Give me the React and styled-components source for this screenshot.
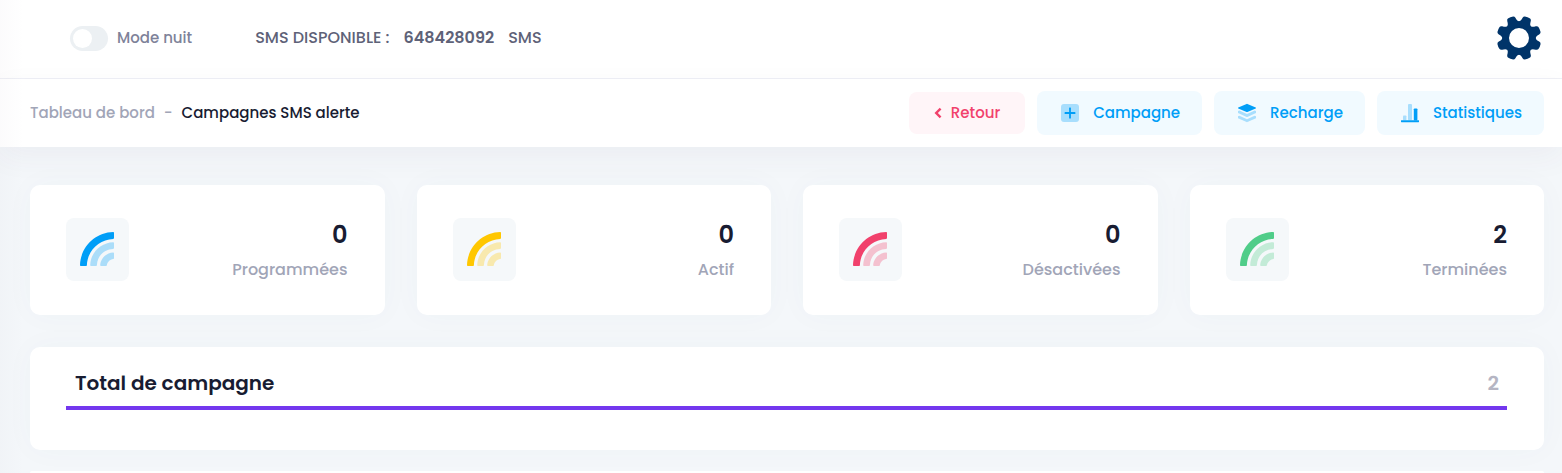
import React, { useState } from 'react'

import styled, { createGlobalStyle } from 'styled-components'

const GlobalStyle = createGlobalStyle`
  * {
    box-sizing: border-box;
  }

  body {
    margin: 0;
    font-family: Poppins, Inter, Helvetica, sans-serif;
    font-size: 16px;
    font-weight: 500;
    line-height: 24px;
    color: #181c32;
    background: #f4f7fa;
  }
`

const Page = styled.div`
  position: relative;
  min-height: 100vh;

  &::before {
    content: '';
    position: absolute;
    z-index: 2;
    top: 0;
    bottom: 0;
    left: 0;
    width: 24px;
    pointer-events: none;
    background: linear-gradient(to right, rgba(82, 63, 105, 0.02), rgba(82, 63, 105, 0));
  }
`

const TopBar = styled.header`
  display: flex;
  align-items: center;
  height: 79px;
  padding: 0 21px 2px 70px;
  background: #fff;
  border-bottom: 1px solid #eff0f6;
`

const NightSwitch = styled.label`
  display: flex;
  align-items: center;
  gap: 9px;
  font-size: 15px;
  color: #7e8299;
  cursor: pointer;
`

const SwitchInput = styled.input`
  appearance: none;
  display: flex;
  align-items: center;
  width: 38px;
  height: 25px;
  margin: 0;
  padding: 0 3px;
  border-radius: 13px;
  background: #ecf0f3;
  cursor: pointer;

  &::before {
    content: '';
    width: 19px;
    height: 19px;
    border-radius: 50%;
    background: #fff;
  }

  &:checked {
    justify-content: flex-end;
    background: #7337ee;
  }
`

const Credit = styled.div`
  display: flex;
  gap: 14px;
  margin-left: 63px;
  color: #5e6278;

  strong {
    font-weight: 600;
  }
`

const IconButton = styled.button`
  display: flex;
  margin-left: auto;
  padding: 0;
  border: none;
  background: none;
  cursor: pointer;
`

const SubHeader = styled.div`
  position: relative;
  display: flex;
  align-items: center;
  justify-content: space-between;
  padding: 12px 18px 12px 30px;
  background: #fff;
  font-size: 15px;
  box-shadow: 0 10px 30px 0 rgba(82, 63, 105, 0.05);
`

const Breadcrumb = styled.nav`
  display: flex;
  gap: 9px;
  color: #a1a5b7;

  a {
    color: inherit;
    text-decoration: none;
  }
`

const Current = styled.span`
  color: #181c32;
`

const Actions = styled.div`
  display: flex;
  align-items: center;
  gap: 12px;
`

const Action = styled.a`
  display: flex;
  align-items: center;
  gap: ${props => props.$danger ? '9px' : '13px'};
  height: ${props => props.$danger ? '42px' : '44px'};
  padding: ${props => props.$danger ? '0 25px' : '0 22px 0 23px'};
  border-radius: 8px;
  text-decoration: none;
  color: ${props => props.$danger ? '#f1416c' : '#009ef7'};
  background: ${props => props.$danger ? '#fff5f8' : '#f1faff'};
`

const Content = styled.main`
  display: flex;
  flex-direction: column;
  gap: 32px;
  padding: 38px 18px 0 30px;
`

const Stats = styled.div`
  display: grid;
  grid-template-columns: repeat(4, 1fr);
  gap: 32px;
`

const Card = styled.section`
  border-radius: 10px;
  background: #fff;
  box-shadow: 0 0 30px 0 rgba(76, 87, 125, 0.03);
`

const StatCard = styled(Card)`
  display: flex;
  align-items: center;
  justify-content: space-between;
  height: 130px;
  padding: 0 37px 1px 36px;
`

const Symbol = styled.span`
  display: flex;
  align-items: center;
  justify-content: center;
  width: 63px;
  height: 63px;
  border-radius: 8px;
  background: #f5f8fa;
`

const StatText = styled.div`
  display: flex;
  flex-direction: column;
  gap: 5px;
  text-align: right;
  color: #a1a5b7;
`

const StatValue = styled.span`
  font-size: 24px;
  font-weight: 600;
  line-height: 36px;
  color: #181c32;
`

const Panels = styled.div`
  display: flex;
  flex-direction: column;
  gap: 21px;
`

const TotalCard = styled(Card)`
  padding: 20px 37px 40px 36px;
`

const TotalRow = styled.div`
  display: flex;
  justify-content: space-between;
  padding: 0 8px 7px 9px;
  border-bottom: 4px solid #7337ee;
  font-size: 20px;
  line-height: 32px;
  font-weight: 600;
  color: #b5b5c3;
`

const TotalTitle = styled.h2`
  margin: 0;
  font-size: inherit;
  font-weight: inherit;
  color: #181c32;
`

const ListCard = styled(Card)`
  height: 2px;
  border-radius: 10px 10px 0 0;
`

const TEETH = [0, 45, 90, 135, 180, 225, 270, 315]

function GearIcon() {
  return (
    <svg width="44" height="44" viewBox="-22 -22 44 44" fill="#003469" aria-hidden="true">
      {TEETH.map(angle => (
        <path
          key={angle}
          transform={`rotate(${angle + 22.5})`}
          d="M-6.4 -15.4 C-5.1 -16.2 -4.7 -17.6 -4.4 -20 Q-4.2 -21.8 -2.8 -22.2 Q0 -22.8 2.8 -22.2 Q4.2 -21.8 4.4 -20 C4.7 -17.6 5.1 -16.2 6.4 -15.4 L5 -12 H-5 Z"
        />
      ))}
      <circle r="13.3" fill="none" stroke="#003469" strokeWidth="6.6" />
    </svg>
  )
}

function BackIcon() {
  return (
    <svg width="8" height="12" viewBox="0 0 8 12" fill="none" stroke="currentColor" strokeWidth="2.4" aria-hidden="true">
      <path d="M6.6 1.6 L2.2 6 L6.6 10.4" />
    </svg>
  )
}

function PlusIcon() {
  return (
    <svg width="20" height="18" viewBox="-1 0 20 18" fill="currentColor" aria-hidden="true">
      <rect width="18" height="18" rx="3" opacity="0.3" />
      <path d="M8.1 4.1 Q8.1 3.6 8.6 3.6 H9.4 Q9.9 3.6 9.9 4.1 V8.1 H13.9 Q14.4 8.1 14.4 8.6 V9.4 Q14.4 9.9 13.9 9.9 H9.9 V13.9 Q9.9 14.4 9.4 14.4 H8.6 Q8.1 14.4 8.1 13.9 V9.9 H4.1 Q3.6 9.9 3.6 9.4 V8.6 Q3.6 8.1 4.1 8.1 H8.1 Z" />
    </svg>
  )
}

function LayersIcon() {
  return (
    <svg width="20" height="20" viewBox="-1 0 20 20" fill="currentColor" aria-hidden="true">
      <path d="M8.6 .9 Q9 .7 9.4 .9 L17.7 4.4 Q18.4 4.9 17.7 5.4 L9.4 9 Q9 9.2 8.6 9 L.3 5.4 Q-.4 4.9 .3 4.4 Z" />
      <path opacity="0.3" d="M0 8 L1.4 7.6 L9 11 L16.6 7.6 L18 8 V10 L9.4 13.9 Q9 14.1 8.6 13.9 L0 10 Z" />
      <path opacity="0.3" d="M0 13.2 L1.4 12.8 L9 16.2 L16.6 12.8 L18 13.2 V15.2 L9.4 19.1 Q9 19.3 8.6 19.1 L0 15.2 Z" />
    </svg>
  )
}

function ChartIcon() {
  return (
    <svg width="20" height="20" viewBox="-1 0 20 20" fill="currentColor" aria-hidden="true">
      <rect x="2" y="12.4" width="3.4" height="4.8" rx=".8" opacity="0.3" />
      <rect x="7" y="1" width="4" height="16.2" rx=".9" opacity="0.3" />
      <rect x="12.8" y="5.4" width="3.6" height="12" rx=".9" />
      <rect y="17.2" width="18" height="2" rx=".4" />
    </svg>
  )
}

function SignalIcon({ color }) {
  return (
    <svg width="35" height="35" viewBox="0 0 35 35" fill={color} aria-hidden="true">
      <path d="M0 33.2 C.5 15 15 .5 33.2 0 Q34 0 34 .8 V6.1 Q34 6.9 33.2 6.9 C19 7.3 7.3 19 6.9 33.2 Q6.9 34 6.1 34 H.8 Q0 34 0 33.2 Z" />
      <path opacity="0.3" d="M10.2 33.2 C10.6 20.6 20.6 10.6 33.2 10.2 Q34 10.2 34 11 V16.1 Q34 16.9 33.2 16.9 C24 17.3 17.3 24 16.9 33.2 Q16.9 34 16.1 34 H11 Q10.2 34 10.2 33.2 Z" />
      <path opacity="0.3" d="M20.2 33.2 C20.6 26.4 26.4 20.6 33.2 20.4 Q34 20.4 34 21.2 V26.3 Q34 27.1 33.2 27.1 C30 27.6 27.4 30 26.9 33.2 Q26.8 34 26 34 H21 Q20.2 34 20.2 33.2 Z" />
    </svg>
  )
}

const stats = [
  { label: 'Programmées', value: 0, color: '#009ef7' },
  { label: 'Actif', value: 0, color: '#ffc700' },
  { label: 'Désactivées', value: 0, color: '#f1416c' },
  { label: 'Terminées', value: 2, color: '#50cd89' },
]

export default function App() {
  const [night, setNight] = useState(false)

  return (
    <>
      <GlobalStyle />
      <Page>
        <TopBar>
          <NightSwitch htmlFor="night">
            <SwitchInput
              id="night"
              type="checkbox"
              checked={night}
              onChange={e => setNight(e.target.checked)}
            />
            Mode nuit
          </NightSwitch>
          <Credit>
            <span>SMS DISPONIBLE :</span>
            <strong>648428092</strong>
            <span>SMS</span>
          </Credit>
          <IconButton type="button" aria-label="Paramètres">
            <GearIcon />
          </IconButton>
        </TopBar>
        <SubHeader>
          <Breadcrumb>
            <a href="#dashboard">Tableau de bord</a>
            <span>-</span>
            <Current>Campagnes SMS alerte</Current>
          </Breadcrumb>
          <Actions>
            <Action href="#retour" $danger>
              <BackIcon />
              Retour
            </Action>
            <Action href="#campagne">
              <PlusIcon />
              Campagne
            </Action>
            <Action href="#recharge">
              <LayersIcon />
              Recharge
            </Action>
            <Action href="#statistiques">
              <ChartIcon />
              Statistiques
            </Action>
          </Actions>
        </SubHeader>
        <Content>
          <Stats>
            {stats.map(({ label, value, color }) => (
              <StatCard key={label}>
                <Symbol>
                  <SignalIcon color={color} />
                </Symbol>
                <StatText>
                  <StatValue>{value}</StatValue>
                  <span>{label}</span>
                </StatText>
              </StatCard>
            ))}
          </Stats>
          <Panels>
            <TotalCard>
              <TotalRow>
                <TotalTitle>Total de campagne</TotalTitle>
                <span>2</span>
              </TotalRow>
            </TotalCard>
            <ListCard />
          </Panels>
        </Content>
      </Page>
    </>
  )
}
